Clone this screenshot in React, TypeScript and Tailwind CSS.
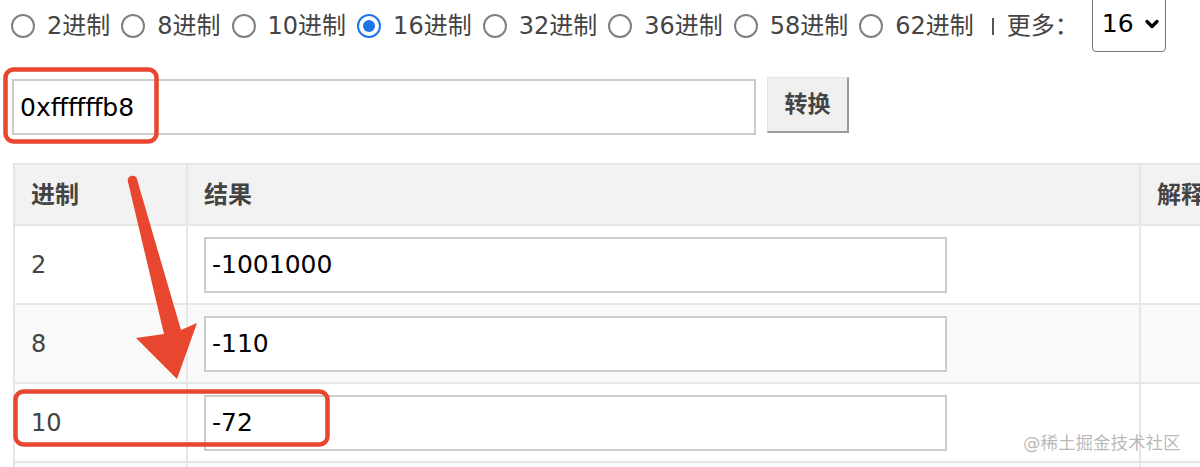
import { ChevronDown } from 'lucide-react';

const bases = ['2', '8', '10', '16', '32', '36', '58', '62'];

const rows = [
  { base: '2', value: '-1001000' },
  { base: '8', value: '-110' },
  { base: '10', value: '-72' },
];

function Radio({ checked }: { checked: boolean }) {
  if (checked) {
    return (
      <span className="shrink-0 mt-[4px] w-[24px] h-[24px] rounded-full border-[2.5px] border-[#1f74e8] flex items-center justify-center bg-white">
        <span className="w-[12px] h-[12px] rounded-full bg-[#1f74e8]" />
      </span>
    );
  }
  return <span className="shrink-0 mt-[4px] w-[24px] h-[24px] rounded-full border-2 border-[#808080] bg-white" />;
}

function Annotations() {
  return (
    <svg
      className="absolute left-0 top-0 pointer-events-none"
      width="1200"
      height="467"
      viewBox="0 0 1200 467"
    >
      <rect x="5.5" y="69.5" width="151" height="72" rx="8" fill="none" stroke="#e8462e" strokeWidth="4.5" />
      <rect x="15.5" y="391.5" width="312" height="53" rx="8" fill="none" stroke="#e8462e" strokeWidth="4.5" />
      <circle cx="132.5" cy="180.5" r="4.8" fill="#e8462e" />
      <polygon
        points="127.8,181 137.2,180 181,330 197,323 177,379 136,338 164,334"
        fill="#e8462e"
      />
    </svg>
  );
}

export default function App() {
  return (
    <div className="relative w-[1200px] h-[467px] overflow-hidden bg-white font-['DejaVu_Sans','Noto_Sans_CJK_SC',sans-serif] text-[#444]">
      {/* Base picker */}
      <div className="-mt-1 h-[56px] w-[1300px] flex items-center pl-[11px] text-[24px]">
        {bases.map((b) => (
          <label key={b} className="shrink-0 flex items-center mr-[11px]">
            <Radio checked={b === '16'} />
            <span className="ml-[12px] pt-[3px] whitespace-nowrap">{b}进制</span>
          </label>
        ))}
        <span className="shrink-0 ml-[7px] mr-[13px] mt-[4px] w-[2px] h-[17px] bg-[#555]" />
        <span className="shrink-0 pt-[3px] whitespace-nowrap">更多：</span>
        <div className="shrink-0 ml-[13px] w-[74px] h-[56px] border-[1.5px] border-[#767676] rounded-[4px] flex items-center pl-[9px] text-black text-[25px]">
          <span>16</span>
          <ChevronDown className="ml-[8px] w-[20px] h-[20px]" strokeWidth={4} />
        </div>
      </div>

      {/* Input */}
      <div className="mt-[25px] flex items-start pl-[12px]">
        <input
          value="0xffffffb8"
          readOnly
          className="mt-[2px] w-[744px] h-[56px] border-2 border-[#ccc] px-[6px] text-[25px] text-black outline-none"
        />
        <button className="ml-[11px] w-[82px] h-[56px] bg-[#f0f0f0] border-t border-l border-[#e2e2e2] border-b-2 border-r-2 border-b-[#9a9a9a] border-r-[#9a9a9a] text-[23px] font-bold text-[#444]">
          转换
        </button>
      </div>

      {/* Result table */}
      <div className="mt-[28px] ml-[13px] w-[1400px] border-l-2 border-t-2 border-[#e6e6e6]">
        <div className="grid grid-cols-[173px_953px_274px] h-[61px] bg-[#f2f2f2] text-[24px] font-bold text-[#444]">
          <div className="flex items-center pl-[16px] border-r-2 border-b-2 border-[#e6e6e6]">进制</div>
          <div className="flex items-center pl-[16px] border-r-2 border-b-2 border-[#e6e6e6]">结果</div>
          <div className="flex items-center pl-[16px] border-r-2 border-b-2 border-[#e6e6e6]">解释</div>
        </div>
        {rows.map((r, i) => (
          <div
            key={r.base}
            className={`grid grid-cols-[173px_953px_274px] h-[79px] text-[24px] ${i % 2 === 1 ? 'bg-[#f9f9f9]' : 'bg-white'}`}
          >
            <div className="flex items-center pl-[16px] border-r-2 border-b-2 border-[#e6e6e6]">{r.base}</div>
            <div className="flex items-center pl-[16px] border-r-2 border-b-2 border-[#e6e6e6]">
              <input
                value={r.value}
                readOnly
                className="w-[743px] h-[56px] bg-white border-2 border-[#ccc] px-[6px] text-[25px] text-black outline-none"
              />
            </div>
            <div className="border-r-2 border-b-2 border-[#e6e6e6]" />
          </div>
        ))}
        <div className="grid grid-cols-[173px_953px_274px] h-[79px] bg-[#f9f9f9]">
          <div className="border-r-2 border-[#e6e6e6]" />
          <div className="border-r-2 border-[#e6e6e6]" />
          <div className="border-r-2 border-[#e6e6e6]" />
        </div>
      </div>

      <Annotations />

      {/* Watermark */}
      <span className="absolute left-[1023px] top-[430px] text-[17.5px] text-[#9a9a9a]/70 whitespace-nowrap">
        @稀土掘金技术社区
      </span>
    </div>
  );
}
